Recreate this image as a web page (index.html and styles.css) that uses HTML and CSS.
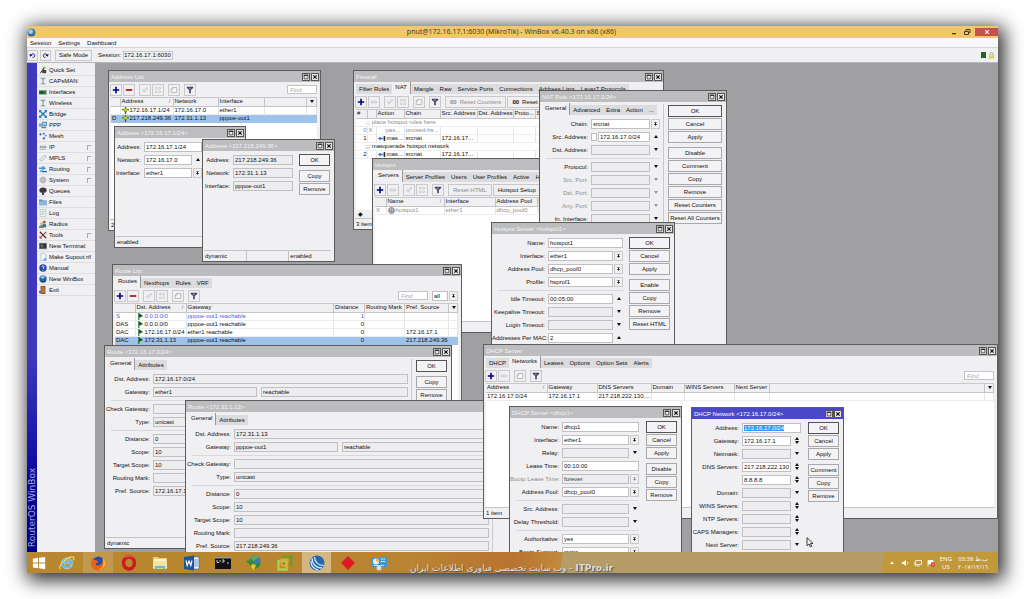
FILE: index.html
```html
<!DOCTYPE html>
<html lang="en">
<head>
    <meta charset="UTF-8">
    <meta name="viewport" content="width=device-width, initial-scale=1.0">
    <title>pnut@172.16.17.1:6030 (MikroTik) - WinBox v6.40.3 on x86 (x86)</title>
    <link rel="stylesheet" href="styles.css">
</head>
<body>
    <!-- shared icons -->
    <svg class="sprites" aria-hidden="true">
        <symbol id="i-plus" viewBox="0 0 10 10"><path d="M4 1h2v3h3v2H6v3H4V6H1V4h3z" fill="#00008b"/></symbol>
        <symbol id="i-minus" viewBox="0 0 10 10"><path d="M1 4h8v2H1z" fill="#a00000"/></symbol>
        <symbol id="i-minus-off" viewBox="0 0 10 10"><path d="M1.5 4h7v2h-7z" fill="#eee" stroke="#aaa" stroke-width=".6"/></symbol>
        <symbol id="i-check" viewBox="0 0 10 10"><path d="M2 5l2 2.5L8.500 2.500 7 2 4 5.500 3 4.500z" fill="#f4f4f4" stroke="#b0b0b0" stroke-width=".7"/></symbol>
        <symbol id="i-cross" viewBox="0 0 10 10"><path d="M2 2h2l1 1.500L6 2h2v1.500L6.500 5 8 6.500V8H6L5 6.500 4 8H2V6.500L3.500 5 2 3.500z" fill="#f4f4f4" stroke="#b0b0b0" stroke-width=".7"/></symbol>
        <symbol id="i-note" viewBox="0 0 10 10"><path d="M1.500 8V4l2-2h5v6z" fill="#f8f8f8" stroke="#999" stroke-width=".8"/><path d="M1.500 4h2V2" fill="none" stroke="#999" stroke-width=".7"/></symbol>
        <symbol id="i-filter" viewBox="0 0 10 10"><path d="M1 1h8v1.500L6 5v4H4V5L1 2.500z" fill="#3c4064"/><path d="M3 2.200h3L5 4.500z" fill="#a8aed0"/></symbol>
        <symbol id="i-max" viewBox="0 0 8 8"><path d="M1.500 1.500h5v5h-5z" fill="none" stroke="#333"/><path d="M1 1h6v1.600H1z" fill="#333"/></symbol>
        <symbol id="i-close" viewBox="0 0 8 8"><path d="M1.800 1.800l4.400 4.400M6.200 1.800L1.800 6.200" stroke="#111" stroke-width="1.500"/></symbol>
        <symbol id="i-drop" viewBox="0 0 8 8"><path d="M2 1h4v1H2zM3.300 2h1.400v2H6.500L4 6.800 1.500 4h1.800z" fill="currentColor"/></symbol>
        <symbol id="i-ip" viewBox="0 0 8 8"><path d="M3 0h2v2h3v2H5.500v1.500H4.800V8H3.200V5.500H2.500V4H0V2h3z" fill="#7b8a10"/><path d="M2 2.500h4L4 5z" fill="#e8e060"/><path d="M3.500 5h1v3h-1z" fill="#444"/></symbol>
        <symbol id="i-flag" viewBox="0 0 8 8"><path d="M1.500 0v8h1.200V5.500L7 3.500 2.700.5V0z" fill="#086018"/></symbol>
        <symbol id="i-masq" viewBox="0 0 10 8"><path d="M0 4l3-2.500V3h3v2H3v1.500z" fill="#2f6fb0"/><path d="M7 1h2v6H7z" fill="#223"/></symbol>
        <symbol id="i-hotspot" viewBox="0 0 8 8"><circle cx="4" cy="4" r="3.400" fill="#ddd" stroke="#666" stroke-width=".8"/><path d="M1 3.500h6M1 5h6M4 .5v7M2.500 1c-1 2-1 4 0 6M5.500 1c1 2 1 4 0 6" stroke="#777" stroke-width=".6" fill="none"/></symbol>
        <symbol id="i-antenna" viewBox="0 0 10 10"><path d="M4.400 3h1.200v5H8v1H2V8h2.400z" fill="#5f8f86"/><path d="M2 1h6v1.500H6.500L5 4 3.500 2.500H2z" fill="#7cb0a4"/></symbol>
    </svg>

    <div class="app">
        <header class="titlebar">
            <svg class="app-icon" viewBox="0 0 10 10"><circle cx="5" cy="5" r="4.500" fill="#3b7fb8"/><circle cx="4" cy="4" r="2.600" fill="#a5cbe6"/><path d="M1.500 6.500c2 2.500 5 2.500 7 0" stroke="#1b4b7d" fill="none"/></svg>
            <h1>pnut@172.16.17.1:6030 (MikroTik) - WinBox v6.40.3 on x86 (x86)</h1>
            <div class="caption-buttons">
                <button aria-label="Minimize"><svg viewBox="0 0 8 8"><path d="M2 5h4v1.300H2z" fill="#4a3a10"/></svg></button>
                <button aria-label="Restore"><svg viewBox="0 0 8 8"><path d="M1.500 3.500h4v3h-4zM3 3V1.500h4v3H6" fill="none" stroke="#4a3a10"/></svg></button>
                <button class="close" aria-label="Close"><svg viewBox="0 0 8 8"><path d="M2.200 2.200l3.600 3.600M5.800 2.200L2.200 5.800" stroke="#fff" stroke-width="1.100"/></svg></button>
            </div>
        </header>
        <nav class="menubar">
            <a href="#">Session</a>
            <a href="#">Settings</a>
            <a href="#">Dashboard</a>
        </nav>
        <div class="main-toolbar">
            <button class="sq" aria-label="Undo"><svg viewBox="0 0 8 8"><path d="M2 4c1-3 5-2 4.500.5C6.300 6 5 6.500 4 6" fill="none" stroke="#14148c" stroke-width="1.100"/><path d="M.5 2l.7 3.300L4 3.800z" fill="#14148c"/></svg></button>
            <button class="sq" aria-label="Redo"><svg viewBox="0 0 8 8"><path d="M6 4C5 1 1 2 1.500 4.500 1.700 6 3 6.500 4 6" fill="none" stroke="#14148c" stroke-width="1.100"/><path d="M7.500 2l-.7 3.300L4 3.800z" fill="#14148c"/></svg></button>
            <button class="safe">Safe Mode</button>
            <label for="session">Session:</label>
            <input id="session" type="text" value="172.16.17.1:6030" readonly>
            <span class="led"></span>
            <svg class="lock" viewBox="0 0 8 8"><path d="M2.500 4V2.500a1.500 1.500 0 0 1 3 0V4" fill="none" stroke="#999" stroke-width=".9"/><path d="M1 3.500h6V8H1z" fill="#d8c94e"/><path d="M1.500 5h5" stroke="#f5eea0"/></svg>
        </div>

        <div class="content">
            <div class="brand"><span>RouterOS WinBox</span></div>
            <nav class="side">
                <a href="#"><svg viewBox="0 0 10 10"><path d="M1 9l5-7 1 1-5 6z" fill="#222"/><path d="M4 9V5h5v4z" fill="#3d4a35"/><path d="M7 0l.6 1.500L9 2l-1.400.6L7 4l-.6-1.400L5 2z" fill="#9fb845"/></svg>Quick Set</a>
                <a href="#"><svg><use href="#i-antenna"/></svg>CAPsMAN</a>
                <a href="#"><svg viewBox="0 0 10 10"><path d="M0 3h9v5H0z" fill="#1f7a2e"/><path d="M2 4h3v3H2z" fill="#125020"/><path d="M9 2v7" stroke="#999"/></svg>Interfaces</a>
                <a href="#"><svg><use href="#i-antenna"/></svg>Wireless</a>
                <a href="#"><svg viewBox="0 0 10 10"><path d="M0 0h3.500L2.500 1.200 5 3.700l2.500-2.500L6.500 0H10v3.500L8.800 2.500 6.300 5l2.500 2.500L10 6.500V10H6.500l1-1.200L5 6.300 2.500 8.800l1 1.200H0V6.500l1.200 1L3.700 5 1.200 2.500 0 3.500z" fill="#2d83bd"/></svg>Bridge</a>
                <a href="#"><svg viewBox="0 0 10 10"><path d="M4 1h6v5H4z" fill="#3d7fb0"/><path d="M5 2h4v3H5z" fill="#a9d4ee"/><path d="M0 3h4v4H0z" fill="#79a8c8"/><path d="M3 7h6v2H3z" fill="#6a7f90"/></svg>PPP</a>
                <a href="#"><svg viewBox="0 0 10 10"><path d="M2 3l4-1 2 2-1 4" stroke="#a9c2e6" fill="none"/><circle cx="1.800" cy="3" r="1.300" fill="#3c64c8"/><circle cx="6" cy="2" r="1.200" fill="#3c64c8"/><circle cx="8.500" cy="4.500" r="1.200" fill="#5f8be0"/><circle cx="6" cy="8" r="1.400" fill="#3c64c8"/></svg>Mesh</a>
                <a href="#" class="sub"><svg viewBox="0 0 10 10"><path d="M1 3h8v4H1z" fill="#d6d9d6"/><path d="M1 4h2v2H1zM4 4h2v2H4zM7 4h2v2H7z" fill="#7b8b85"/><path d="M1 8h8" stroke="#aaa"/></svg>IP</a>
                <a href="#" class="sub"><svg viewBox="0 0 10 10"><path d="M1 7l5-5c2-1 3 1 2 2.500L4 8C2 9 1 8 1 7z" fill="#e6efe8" stroke="#92aaa0" stroke-width=".8"/></svg>MPLS</a>
                <a href="#" class="sub"><svg viewBox="0 0 10 10"><path d="M0 3h4V1l5 3-5 2.500V5H0z" fill="#3d95d4"/><path d="M10 9H4l-2-2 1-1 2 1.500h5z" fill="#1e6cb0"/><path d="M1 7l3-1v3H1z" fill="#69b2e4"/></svg>Routing</a>
                <a href="#" class="sub"><svg viewBox="0 0 10 10"><circle cx="5" cy="5" r="3.600" fill="#c4c4c4" stroke="#999" stroke-width="1.200" stroke-dasharray="1.400 .8"/><circle cx="5" cy="5" r="1.500" fill="#eee" stroke="#888" stroke-width=".6"/></svg>System</a>
                <a href="#"><svg viewBox="0 0 10 10"><ellipse cx="5" cy="4" rx="4.500" ry="3.300" fill="#35383c"/><path d="M4.300 6h1.600l.6 4H3.500z" fill="#4c3c38"/><path d="M2 3h2M6 5h2" stroke="#7a4050"/></svg>Queues</a>
                <a href="#"><svg viewBox="0 0 10 10"><path d="M0 2h4l1 1h5v6H0z" fill="#5d92bc"/><path d="M0 4h10v5H0z" fill="#8db9da"/></svg>Files</a>
                <a href="#"><svg viewBox="0 0 10 10"><path d="M1.500.5h7v9h-7z" fill="#f2faf5" stroke="#97b8ac" stroke-width=".8"/><path d="M3 3h4M3 5h4M3 7h3" stroke="#6aa894" stroke-width=".7"/></svg>Log</a>
                <a href="#"><svg viewBox="0 0 10 10"><circle cx="6.500" cy="2.500" r="2" fill="#a86a30"/><path d="M4 9V6l2.500-1.500L9 6v3z" fill="#3f6f9c"/><circle cx="3" cy="4.500" r="1.700" fill="#e2b070"/><path d="M0 10V8l3-2 3 2v2z" fill="#6e8f3e"/></svg>Radius</a>
                <a href="#" class="sub"><svg viewBox="0 0 10 10"><path d="M1 1l8 8" stroke="#7a2020" stroke-width="1.600"/><path d="M9 1L2 8" stroke="#555" stroke-width="1.300"/><path d="M.5 7l2.500 2.500" stroke="#c23030" stroke-width="1.600"/></svg>Tools</a>
                <a href="#"><svg viewBox="0 0 10 10"><path d="M0 1h10v8H0z" fill="#888"/><path d="M1 2h8v6H1z" fill="#2e3234"/><path d="M2 4h3M2 6h4" stroke="#b5b5b5" stroke-width=".8"/></svg>New Terminal</a>
                <a href="#"><svg viewBox="0 0 10 10"><path d="M2.500.5h4l2 2v7h-6z" fill="#fbfdff" stroke="#92aabd" stroke-width=".8"/><circle cx="7.500" cy="8" r="2" fill="#79b7e4"/></svg>Make Supout.rif</a>
                <a href="#"><svg viewBox="0 0 10 10"><circle cx="5" cy="5" r="4.600" fill="#2644a8"/><path d="M3.500 4c0-2 3-2 3-.3C6.500 5 5 5 5 6.300M5 7.200v1.200" stroke="#fff" stroke-width="1.100" fill="none"/></svg>Manual</a>
                <a href="#"><svg viewBox="0 0 10 10"><circle cx="5" cy="5" r="4.600" fill="#2464a0"/><path d="M1.500 3C3 0 7 0 8 2L5 5z" fill="#8fc0e4"/><path d="M2 7c2 2 5 2 6.500 0" stroke="#123a66" fill="none"/></svg>New WinBox</a>
                <a href="#"><svg viewBox="0 0 10 10"><path d="M2 0h6v10H2z" fill="#8a4f22"/><path d="M3 1h4v8H3z" fill="#b87436"/><path d="M0 6h3v3H0z" fill="#5e6f88"/><circle cx="6.300" cy="5.500" r=".6" fill="#f0d080"/></svg>Exit</a>
            </nav>

            <main class="desk">
                <!-- Address List -->
                <section class="win win-addresses">
                    <div class="bar"><h2>Address List</h2><button aria-label="Maximize"><svg><use href="#i-max"/></svg></button><button aria-label="Close"><svg><use href="#i-close"/></svg></button></div>
                    <div class="tools">
                        <button aria-label="Add"><svg><use href="#i-plus"/></svg></button>
                        <button aria-label="Remove"><svg><use href="#i-minus"/></svg></button>
                        <button class="sep" aria-label="Enable"><svg><use href="#i-check"/></svg></button>
                        <button aria-label="Disable"><svg><use href="#i-cross"/></svg></button>
                        <button class="sep" aria-label="Comment"><svg><use href="#i-note"/></svg></button>
                        <button class="sep" aria-label="Filter"><svg><use href="#i-filter"/></svg></button>
                        <input class="find" type="text" placeholder="Find" aria-label="Find address">
                    </div>
                    <div class="sheet">
                        <table class="t-addresses">
                            <thead><tr><th></th><th class="sorted">Address</th><th>Network</th><th>Interface</th><th></th><th class="more"></th></tr></thead>
                            <tbody>
                                <tr><td></td><td><svg><use href="#i-ip"/></svg>172.16.17.1/24</td><td>172.16.17.0</td><td>ether1</td><td></td><td></td></tr>
                                <tr class="sel"><td>D</td><td><svg><use href="#i-ip"/></svg>217.218.249.36</td><td>172.31.1.13</td><td>pppoe-out1</td><td></td><td></td></tr>
                            </tbody>
                        </table>
                    </div>
                    <div class="status"><span>2 items (1 selected)</span></div>
                </section>

                <!-- Address <172.16.17.1/24> -->
                <section class="win win-address-a">
                    <div class="bar"><h2>Address &lt;172.16.17.1/24&gt;</h2><button aria-label="Maximize"><svg><use href="#i-max"/></svg></button><button aria-label="Close"><svg><use href="#i-close"/></svg></button></div>
                    <div class="dialog">
                        <div class="fields">
                            <div class="row"><label for="aa1">Address:</label><input id="aa1" type="text" value="172.16.17.1/24"></div>
                            <div class="row"><label for="aa2">Network:</label><input id="aa2" type="text" value="172.16.17.0"><button class="arrow up" aria-label="Hide"></button></div>
                            <div class="row"><label for="aa3">Interface:</label><select id="aa3"><option>ether1</option></select><svg class="drop"><use href="#i-drop"/></svg></div>
                        </div>
                    </div>
                    <div class="status"><span>enabled</span></div>
                </section>

                <!-- Address <217.218.249.36> -->
                <section class="win win-address-b">
                    <div class="bar"><h2>Address &lt;217.218.249.36&gt;</h2><button aria-label="Maximize"><svg><use href="#i-max"/></svg></button><button aria-label="Close"><svg><use href="#i-close"/></svg></button></div>
                    <div class="dialog">
                        <div class="fields">
                            <div class="row"><label for="ab1">Address:</label><input id="ab1" type="text" value="217.218.249.36" readonly></div>
                            <div class="row"><label for="ab2">Network:</label><input id="ab2" type="text" value="172.31.1.13" readonly></div>
                            <div class="row"><label for="ab3">Interface:</label><input id="ab3" type="text" value="pppoe-out1" readonly></div>
                        </div>
                        <div class="actions"><button class="ok">OK</button><button class="gap">Copy</button><button>Remove</button></div>
                    </div>
                    <div class="status"><span>dynamic</span><span></span><span>enabled</span></div>
                </section>

                <!-- Firewall -->
                <section class="win win-firewall">
                    <div class="bar"><h2>Firewall</h2><button aria-label="Maximize"><svg><use href="#i-max"/></svg></button><button aria-label="Close"><svg><use href="#i-close"/></svg></button></div>
                    <div class="tabs">
                        <button>Filter Rules</button><button class="on">NAT</button><button>Mangle</button><button>Raw</button><button>Service Ports</button><button>Connections</button><button>Address Lists</button><button>Layer7 Protocols</button>
                    </div>
                    <div class="tools">
                        <button aria-label="Add"><svg><use href="#i-plus"/></svg></button>
                        <button aria-label="Remove"><svg><use href="#i-minus-off"/></svg></button>
                        <button class="sep" aria-label="Enable"><svg><use href="#i-check"/></svg></button>
                        <button aria-label="Disable"><svg><use href="#i-cross"/></svg></button>
                        <button class="sep" aria-label="Comment"><svg><use href="#i-note"/></svg></button>
                        <button class="sep" aria-label="Filter"><svg><use href="#i-filter"/></svg></button>
                        <button class="text sep" disabled><b>00</b> Reset Counters</button>
                        <button class="text"><b>00</b> Reset All Counters</button>
                    </div>
                    <div class="sheet">
                        <table class="t-nat">
                            <thead><tr><th>#</th><th></th><th>Action</th><th>Chain</th><th>Src. Address</th><th>Dst. Address</th><th>Proto...</th><th>Src. Port</th><th>Dst. Port</th></tr></thead>
                            <tbody>
                                <tr class="dim"><td colspan="9" class="note">;;; place hotspot rules here</td></tr>
                                <tr class="dim"><td>0</td><td>X</td><td class="deep">pas...</td><td>unused-hs...</td><td></td><td></td><td></td><td></td><td></td></tr>
                                <tr><td>1</td><td></td><td><svg class="wide"><use href="#i-masq"/></svg>mas...</td><td>srcnat</td><td>172.16.17...</td><td></td><td></td><td></td><td></td></tr>
                                <tr><td colspan="9" class="note">;;; masquerade hotspot network</td></tr>
                                <tr><td>2</td><td></td><td><svg class="wide"><use href="#i-masq"/></svg>mas...</td><td>srcnat</td><td>172.16.17...</td><td></td><td></td><td></td><td></td></tr>
                            </tbody>
                        </table>
                    </div>
                    <div class="hscroll"><span>&#9670;</span></div>
                    <div class="status"><span>3 items</span></div>
                </section>

                <!-- Hotspot -->
                <section class="win win-hotspot">
                    <div class="bar"><h2>Hotspot</h2><button aria-label="Maximize"><svg><use href="#i-max"/></svg></button><button aria-label="Close"><svg><use href="#i-close"/></svg></button></div>
                    <div class="tabs">
                        <button class="on">Servers</button><button>Server Profiles</button><button>Users</button><button>User Profiles</button><button>Active</button><button>Hosts</button>
                    </div>
                    <div class="tools">
                        <button aria-label="Add"><svg><use href="#i-plus"/></svg></button>
                        <button aria-label="Remove"><svg><use href="#i-minus-off"/></svg></button>
                        <button class="sep" aria-label="Enable"><svg><use href="#i-check"/></svg></button>
                        <button aria-label="Disable"><svg><use href="#i-cross"/></svg></button>
                        <button class="sep" aria-label="Filter"><svg><use href="#i-filter"/></svg></button>
                        <button class="text sep" disabled>Reset HTML</button>
                        <button class="text">Hotspot Setup</button>
                    </div>
                    <div class="sheet">
                        <table class="t-hotspot">
                            <thead><tr><th></th><th class="sorted">Name</th><th>Interface</th><th>Address Pool</th><th>Profile</th></tr></thead>
                            <tbody>
                                <tr class="dim"><td>X</td><td><svg><use href="#i-hotspot"/></svg>hotspot1</td><td>ether1</td><td>dhcp_pool0</td><td>hsprof1</td></tr>
                            </tbody>
                        </table>
                    </div>
                    <div class="status"><span></span></div>
                </section>

                <!-- NAT Rule -->
                <section class="win win-natrule">
                    <div class="bar"><h2>NAT Rule &lt;172.16.17.0/24&gt;</h2><button aria-label="Maximize"><svg><use href="#i-max"/></svg></button><button aria-label="Close"><svg><use href="#i-close"/></svg></button></div>
                    <div class="dialog tabbed">
                        <div class="pane">
                            <div class="tabs"><button class="on">General</button><button>Advanced</button><button>Extra</button><button>Action</button><button>...</button></div>
                            <div class="fields">
                                <div class="row"><label for="nr1">Chain:</label><select id="nr1"><option>srcnat</option></select><svg class="drop"><use href="#i-drop"/></svg></div>
                                <div class="row"><label for="nr2">Src. Address:</label><input type="checkbox" aria-label="Not source address"><input id="nr2" type="text" value="172.16.17.0/24"><button class="arrow up" aria-label="Hide"></button></div>
                                <div class="row"><label for="nr3">Dst. Address:</label><input id="nr3" class="off" type="text"><button class="arrow down" aria-label="Show"></button></div>
                                <div class="row rule"><label for="nr4">Protocol:</label><input id="nr4" class="off" type="text"><button class="arrow down" aria-label="Show"></button></div>
                                <div class="row dim"><label for="nr5">Src. Port:</label><input id="nr5" type="text" disabled><button class="arrow down" aria-label="Show" disabled></button></div>
                                <div class="row dim"><label for="nr6">Dst. Port:</label><input id="nr6" type="text" disabled><button class="arrow down" aria-label="Show" disabled></button></div>
                                <div class="row dim"><label for="nr7">Any. Port:</label><input id="nr7" type="text" disabled><button class="arrow down" aria-label="Show" disabled></button></div>
                                <div class="row"><label for="nr8">In. Interface:</label><input id="nr8" class="off" type="text"><button class="arrow down" aria-label="Show"></button></div>
                            </div>
                        </div>
                        <div class="actions"><button class="ok">OK</button><button>Cancel</button><button>Apply</button><button class="gap">Disable</button><button>Comment</button><button>Copy</button><button>Remove</button><button>Reset Counters</button><button>Reset All Counters</button></div>
                    </div>
                </section>

                <!-- Hotspot Server -->
                <section class="win win-hsserver">
                    <div class="bar"><h2>Hotspot Server &lt;hotspot1&gt;</h2><button aria-label="Maximize"><svg><use href="#i-max"/></svg></button><button aria-label="Close"><svg><use href="#i-close"/></svg></button></div>
                    <div class="dialog">
                        <div class="fields">
                            <div class="row"><label for="hs1">Name:</label><input id="hs1" type="text" value="hotspot1"></div>
                            <div class="row"><label for="hs2">Interface:</label><select id="hs2"><option>ether1</option></select><svg class="drop"><use href="#i-drop"/></svg></div>
                            <div class="row"><label for="hs3">Address Pool:</label><select id="hs3"><option>dhcp_pool0</option></select><svg class="drop"><use href="#i-drop"/></svg></div>
                            <div class="row"><label for="hs4">Profile:</label><select id="hs4"><option>hsprof1</option></select><svg class="drop"><use href="#i-drop"/></svg></div>
                            <div class="row rule"><label for="hs5">Idle Timeout:</label><input id="hs5" type="text" value="00:05:00"><button class="arrow up" aria-label="Hide"></button></div>
                            <div class="row"><label for="hs6">Keepalive Timeout:</label><input id="hs6" class="off" type="text"><button class="arrow down" aria-label="Show"></button></div>
                            <div class="row"><label for="hs7">Login Timeout:</label><input id="hs7" class="off" type="text"><button class="arrow down" aria-label="Show"></button></div>
                            <div class="row"><label for="hs8">Addresses Per MAC:</label><input id="hs8" type="text" value="2"><button class="arrow up" aria-label="Hide"></button></div>
                        </div>
                        <div class="actions"><button class="ok">OK</button><button>Cancel</button><button>Apply</button><button class="gap">Enable</button><button>Copy</button><button>Remove</button><button>Reset HTML</button></div>
                    </div>
                </section>

                <!-- Route List -->
                <section class="win win-routes">
                    <div class="bar"><h2>Route List</h2><button aria-label="Maximize"><svg><use href="#i-max"/></svg></button><button aria-label="Close"><svg><use href="#i-close"/></svg></button></div>
                    <div class="tabs"><button class="on">Routes</button><button>Nexthops</button><button>Rules</button><button>VRF</button></div>
                    <div class="tools">
                        <button aria-label="Add"><svg><use href="#i-plus"/></svg></button>
                        <button aria-label="Remove"><svg><use href="#i-minus"/></svg></button>
                        <button class="sep" aria-label="Enable"><svg><use href="#i-check"/></svg></button>
                        <button aria-label="Disable"><svg><use href="#i-cross"/></svg></button>
                        <button class="sep" aria-label="Comment"><svg><use href="#i-note"/></svg></button>
                        <button class="sep" aria-label="Filter"><svg><use href="#i-filter"/></svg></button>
                        <input class="find" type="text" placeholder="Find" aria-label="Find route">
                        <select class="which" aria-label="Table"><option>all</option></select><svg class="drop"><use href="#i-drop"/></svg>
                    </div>
                    <div class="sheet">
                        <table class="t-routes">
                            <thead><tr><th></th><th class="sorted">Dst. Address</th><th>Gateway</th><th>Distance</th><th>Routing Mark</th><th>Pref. Source</th><th class="more"></th></tr></thead>
                            <tbody>
                                <tr class="blue"><td>S</td><td><svg><use href="#i-flag"/></svg>0.0.0.0/0</td><td>pppoe-out1 reachable</td><td class="num">1</td><td></td><td></td><td></td></tr>
                                <tr><td>DAS</td><td><svg><use href="#i-flag"/></svg>0.0.0.0/0</td><td>pppoe-out1 reachable</td><td class="num">0</td><td></td><td></td><td></td></tr>
                                <tr><td>DAC</td><td><svg><use href="#i-flag"/></svg>172.16.17.0/24</td><td>ether1 reachable</td><td class="num">0</td><td></td><td>172.16.17.1</td><td></td></tr>
                                <tr class="sel"><td>DAC</td><td><svg><use href="#i-flag"/></svg>172.31.1.13</td><td>pppoe-out1 reachable</td><td class="num">0</td><td></td><td>217.218.249.36</td><td></td></tr>
                            </tbody>
                        </table>
                    </div>
                </section>

                <!-- Route <172.16.17.0/24> -->
                <section class="win win-route-a">
                    <div class="bar"><h2>Route &lt;172.16.17.0/24&gt;</h2><button aria-label="Maximize"><svg><use href="#i-max"/></svg></button><button aria-label="Close"><svg><use href="#i-close"/></svg></button></div>
                    <div class="dialog tabbed">
                        <div class="pane">
                            <div class="tabs"><button class="on">General</button><button>Attributes</button></div>
                            <div class="fields">
                                <div class="row"><label for="ra1">Dst. Address:</label><input id="ra1" type="text" value="172.16.17.0/24" readonly></div>
                                <div class="row"><label for="ra2">Gateway:</label><input id="ra2" class="gw" type="text" value="ether1" readonly><input type="text" value="reachable" aria-label="Gateway state" readonly></div>
                                <div class="row rule"><label for="ra3">Check Gateway:</label><input id="ra3" type="text" readonly></div>
                                <div class="row"><label for="ra4">Type:</label><input id="ra4" type="text" value="unicast" readonly></div>
                                <div class="row rule"><label for="ra5">Distance:</label><input id="ra5" type="text" value="0" readonly></div>
                                <div class="row"><label for="ra6">Scope:</label><input id="ra6" type="text" value="10" readonly></div>
                                <div class="row"><label for="ra7">Target Scope:</label><input id="ra7" type="text" value="10" readonly></div>
                                <div class="row"><label for="ra8">Routing Mark:</label><input id="ra8" type="text" readonly></div>
                                <div class="row"><label for="ra9">Pref. Source:</label><input id="ra9" type="text" value="172.16.17.1" readonly></div>
                            </div>
                        </div>
                        <div class="actions"><button class="ok">OK</button><button class="gap">Copy</button><button>Remove</button></div>
                    </div>
                    <div class="status"><span>dynamic</span></div>
                </section>

                <!-- Route <172.31.1.13> -->
                <section class="win win-route-b">
                    <div class="bar"><h2>Route &lt;172.31.1.13&gt;</h2><button aria-label="Maximize"><svg><use href="#i-max"/></svg></button><button aria-label="Close"><svg><use href="#i-close"/></svg></button></div>
                    <div class="dialog tabbed">
                        <div class="pane">
                            <div class="tabs"><button class="on">General</button><button>Attributes</button></div>
                            <div class="fields">
                                <div class="row"><label for="rb1">Dst. Address:</label><input id="rb1" type="text" value="172.31.1.13" readonly></div>
                                <div class="row"><label for="rb2">Gateway:</label><input id="rb2" class="gw" type="text" value="pppoe-out1" readonly><input type="text" value="reachable" aria-label="Gateway state" readonly></div>
                                <div class="row rule"><label for="rb3">Check Gateway:</label><input id="rb3" type="text" readonly></div>
                                <div class="row"><label for="rb4">Type:</label><input id="rb4" type="text" value="unicast" readonly></div>
                                <div class="row rule"><label for="rb5">Distance:</label><input id="rb5" type="text" value="0" readonly></div>
                                <div class="row"><label for="rb6">Scope:</label><input id="rb6" type="text" value="10" readonly></div>
                                <div class="row"><label for="rb7">Target Scope:</label><input id="rb7" type="text" value="10" readonly></div>
                                <div class="row"><label for="rb8">Routing Mark:</label><input id="rb8" type="text" readonly></div>
                                <div class="row"><label for="rb9">Pref. Source:</label><input id="rb9" type="text" value="217.218.249.36" readonly></div>
                            </div>
                        </div>
                        <div class="actions"></div>
                    </div>
                </section>

                <!-- DHCP Server -->
                <section class="win win-dhcp">
                    <div class="bar"><h2>DHCP Server</h2><button aria-label="Maximize"><svg><use href="#i-max"/></svg></button><button aria-label="Close"><svg><use href="#i-close"/></svg></button></div>
                    <div class="tabs"><button>DHCP</button><button class="on">Networks</button><button>Leases</button><button>Options</button><button>Option Sets</button><button>Alerts</button></div>
                    <div class="tools">
                        <button aria-label="Add"><svg><use href="#i-plus"/></svg></button>
                        <button aria-label="Remove"><svg><use href="#i-minus-off"/></svg></button>
                        <button class="sep" aria-label="Comment"><svg><use href="#i-note"/></svg></button>
                        <button class="sep" aria-label="Filter"><svg><use href="#i-filter"/></svg></button>
                        <input class="find" type="text" placeholder="Find" aria-label="Find network">
                    </div>
                    <div class="sheet">
                        <table class="t-dhcp">
                            <thead><tr><th class="sorted">Address</th><th>Gateway</th><th>DNS Servers</th><th>Domain</th><th>WINS Servers</th><th>Next Server</th><th></th><th class="more"></th></tr></thead>
                            <tbody>
                                <tr><td>172.16.17.0/24</td><td>172.16.17.1</td><td>217.218.222.130,...</td><td></td><td></td><td></td><td></td><td></td></tr>
                            </tbody>
                        </table>
                    </div>
                    <div class="status"><span>1 item</span></div>
                </section>

                <!-- DHCP Server <dhcp1> -->
                <section class="win win-dhcp1">
                    <div class="bar"><h2>DHCP Server &lt;dhcp1&gt;</h2><button aria-label="Maximize"><svg><use href="#i-max"/></svg></button><button aria-label="Close"><svg><use href="#i-close"/></svg></button></div>
                    <div class="dialog">
                        <div class="fields">
                            <div class="row"><label for="ds1">Name:</label><input id="ds1" type="text" value="dhcp1"></div>
                            <div class="row"><label for="ds2">Interface:</label><select id="ds2"><option>ether1</option></select><svg class="drop"><use href="#i-drop"/></svg></div>
                            <div class="row"><label for="ds3">Relay:</label><input id="ds3" class="off" type="text"><button class="arrow down" aria-label="Show"></button></div>
                            <div class="row"><label for="ds4">Lease Time:</label><input id="ds4" type="text" value="00:10:00"></div>
                            <div class="row dim"><label for="ds5">Bootp Lease Time:</label><select id="ds5" disabled><option>forever</option></select><svg class="drop"><use href="#i-drop"/></svg></div>
                            <div class="row"><label for="ds6">Address Pool:</label><select id="ds6"><option>dhcp_pool0</option></select><svg class="drop"><use href="#i-drop"/></svg></div>
                            <div class="row rule"><label for="ds7">Src. Address:</label><input id="ds7" class="off" type="text"><button class="arrow down" aria-label="Show"></button></div>
                            <div class="row"><label for="ds8">Delay Threshold:</label><input id="ds8" class="off" type="text"><button class="arrow down" aria-label="Show"></button></div>
                            <div class="row rule"><label for="ds9">Authoritative:</label><select id="ds9"><option>yes</option></select><svg class="drop"><use href="#i-drop"/></svg></div>
                            <div class="row"><label for="ds10">Bootp Support:</label><select id="ds10"><option>static</option></select><svg class="drop"><use href="#i-drop"/></svg></div>
                        </div>
                        <div class="actions"><button class="ok">OK</button><button>Cancel</button><button>Apply</button><button class="gap">Disable</button><button>Copy</button><button>Remove</button></div>
                    </div>
                </section>

                <!-- DHCP Network (active window) -->
                <section class="win win-dhcpnet active">
                    <div class="bar"><h2>DHCP Network &lt;172.16.17.0/24&gt;</h2><button aria-label="Maximize"><svg><use href="#i-max"/></svg></button><button aria-label="Close"><svg><use href="#i-close"/></svg></button></div>
                    <div class="dialog">
                        <div class="fields">
                            <div class="row"><label for="dn1">Address:</label><input id="dn1" type="text" value="172.16.17.0/24" autofocus></div>
                            <div class="row"><label for="dn2">Gateway:</label><input id="dn2" type="text" value="172.16.17.1"><button class="arrow up down" aria-label="Add or remove"></button></div>
                            <div class="row"><label for="dn3">Netmask:</label><input id="dn3" class="off" type="text"><button class="arrow down" aria-label="Show"></button></div>
                            <div class="row"><label for="dn4">DNS Servers:</label><input id="dn4" type="text" value="217.218.222.130"><button class="arrow up down" aria-label="Add or remove"></button></div>
                            <div class="row"><label for="dn5"></label><input id="dn5" type="text" value="8.8.8.8" aria-label="Second DNS server"><button class="arrow up down" aria-label="Add or remove"></button></div>
                            <div class="row"><label for="dn6">Domain:</label><input id="dn6" class="off" type="text"><button class="arrow down" aria-label="Show"></button></div>
                            <div class="row"><label for="dn7">WINS Servers:</label><input id="dn7" class="off" type="text"><button class="arrow up down" aria-label="Add or remove"></button></div>
                            <div class="row"><label for="dn8">NTP Servers:</label><input id="dn8" class="off" type="text"><button class="arrow up down" aria-label="Add or remove"></button></div>
                            <div class="row"><label for="dn9">CAPS Managers:</label><input id="dn9" class="off" type="text"><button class="arrow up down" aria-label="Add or remove"></button></div>
                            <div class="row"><label for="dn10">Next Server:</label><input id="dn10" class="off" type="text"><button class="arrow down" aria-label="Show"></button></div>
                        </div>
                        <div class="actions"><button class="ok">OK</button><button>Cancel</button><button>Apply</button><button class="gap">Comment</button><button>Copy</button><button>Remove</button></div>
                    </div>
                </section>

                <svg class="pointer" viewBox="0 0 8 11"><path d="M1 .7v8l2-1.800 1.300 3 1.400-.6L4.500 6.500H7z" fill="#fff" stroke="#222" stroke-width=".9"/></svg>
            </main>
        </div>

        <footer class="taskbar">
            <button class="start" aria-label="Start"><svg viewBox="0 0 16 16"><path d="M1 3l6-1v5.500H1zM8 1.900L15 1v6.500H8zM1 8.500h6V14l-6-1zM8 8.500h7V15l-7-.9z" fill="#fff"/></svg></button>
            <div class="tasks">
                <button aria-label="Internet Explorer"><svg viewBox="0 0 16 16"><path d="M13.500 9H5c.3 3.300 4.500 4 6 1.500h2.300C11.500 15.500 2.500 15 2.500 8.500S11 1.500 13 6c.4 1 .5 2 .5 3zM5.100 7h5.600C10.400 4.300 5.500 4.300 5.100 7z" fill="#45b5ec" stroke="#dff2fb" stroke-width=".5"/><path d="M1 14C-1 10 9 1 14.500 2c1 .5.5 2-.5 3.500" fill="none" stroke="#f4d858" stroke-width="1.200"/></svg></button>
                <button class="lit" aria-label="Firefox"><svg viewBox="0 0 16 16"><circle cx="8.500" cy="7.500" r="6" fill="#2b4f9e"/><path d="M2 3c0 2-1 3-1 5.500A7 7 0 0 0 15 9c.3-3-1-5-2.500-6 1 3-.5 7-4 7.500C6 10.500 5 9 6 8l2.500-.5L7 5.500 4.500 5z" fill="#e8631c"/><path d="M12.500 3c2 1.500 3 4 2.300 7-1 3.500-4 5-7 4.700 5-.7 7-5 4.700-11.700z" fill="#f8c535"/></svg></button>
                <button aria-label="Opera"><svg viewBox="0 0 16 16"><ellipse cx="8" cy="8" rx="5.500" ry="6" fill="none" stroke="#cf1a20" stroke-width="3.400"/><path d="M4 3c2-2.500 6-2.500 8 0" stroke="#f06a60" fill="none"/></svg></button>
                <button aria-label="File Explorer"><svg viewBox="0 0 16 16"><path d="M1 2h5l1 1h8v11H1z" fill="#e8cf7c"/><path d="M2 4h12v3H2z" fill="#fff5cc"/><path d="M1 6h14v7H1z" fill="#f4e2a0"/><path d="M3 15v-4h10v4h-2v-2H5v2z" fill="#62b8e0"/></svg></button>
                <button aria-label="Word"><svg viewBox="0 0 16 16"><path d="M8 2h7v12H8z" fill="#f4f7fb" stroke="#345c9c" stroke-width=".6"/><path d="M10 5h4M10 7h4M10 9h4M10 11h4" stroke="#6f90c4"/><path d="M0 2l10-1.500v15L0 14z" fill="#21529c"/><path d="M2 5.500l1.200 5L5 6l1.800 4.500L8 5.500" stroke="#fff" fill="none" stroke-width="1.200"/></svg></button>
                <button aria-label="Command Prompt"><svg viewBox="0 0 16 16"><path d="M0 2h16v12H0z" fill="#111"/><path d="M0 2h16v1.500H0z" fill="#999"/><path d="M2 5v2.500h2M5 5v2M7 5h2v2H7M12 8h2" stroke="#ddd" fill="none" stroke-width=".9"/></svg></button>
                <button aria-label="Download Manager"><svg viewBox="0 0 16 16"><circle cx="9" cy="6" r="5.500" fill="#3c78b4"/><path d="M5 3c2-3 6-3 8 0-2 1-3 0-4 2s-3 1-4-2z" fill="#57b058"/><path d="M0 6l6-1 3 4 6-1-2 4-5 3-3-4z" fill="#2e8e34"/><path d="M6 9l4 1-2 5.500L5 12z" fill="#f0c42c"/></svg></button>
                <button aria-label="vSphere Client"><svg viewBox="0 0 16 16"><path d="M6 1.500h8.500v8H6z" fill="none" stroke="#6f9c28" stroke-width="2.400"/><path d="M1.500 6h8v8.500h-8z" fill="none" stroke="#a9cf50" stroke-width="2.400"/><path d="M4.500 4.500h6v6h-6z" fill="none" stroke="#f0a032" stroke-width="1.800"/></svg></button>
                <button class="lit strong" aria-label="WinBox"><svg viewBox="0 0 16 16"><circle cx="8" cy="8" r="7.500" fill="#2468ac"/><path d="M3 3c0 6 4 10 10 10M5.500 2c0 5 4 8.500 9 8.500M2 6c0 5 3 8 7 9" stroke="#cfe4f6" fill="none" stroke-width="1.300"/></svg></button>
                <button aria-label="AnyDesk"><svg viewBox="0 0 16 16"><path d="M8 1l7 7-7 7-7-7z" fill="#de1a24"/></svg></button>
                <button aria-label="Control Panel"><svg viewBox="0 0 16 16"><path d="M0 2h16v10H0z" fill="#3f9ad6"/><circle cx="5" cy="6.500" r="3" fill="#e6f3fa"/><path d="M5 6.500V3.500a3 3 0 0 1 3 3z" fill="#f0b840"/><path d="M10 4h4M10 6.500h4M3 10.500h10" stroke="#fff" stroke-width="1.200" stroke-dasharray="1.500 .8"/><circle cx="8" cy="13" r="2.500" fill="#d4dde2"/></svg></button>
            </div>
            <div class="tray">
                <svg viewBox="0 0 8 8"><path d="M4 2.500L6 5H2z" fill="#fff"/></svg>
                <svg viewBox="0 0 8 8"><path d="M1 3h1.500L5 1v6L2.500 5H1z" fill="#fff"/><path d="M6.200 2.500c.8 1 .8 2 0 3" stroke="#fff" fill="none" stroke-width=".7"/></svg>
                <svg viewBox="0 0 8 8"><path d="M1.500 1.500h6v4h-6zM3 7h3" fill="none" stroke="#eee" stroke-width=".9"/><path d="M.8 2.500v4h2" stroke="#eee" fill="none" stroke-width=".8"/></svg>
                <svg viewBox="0 0 8 8"><path d="M1 1v6.500M1.500 1.500H6v3.500H1.500z" stroke="#fff" fill="#fff" stroke-width=".8"/><circle cx="5.800" cy="5.500" r="2.200" fill="#d22b2b"/><path d="M4.900 4.600l1.800 1.800M6.700 4.600L4.900 6.400" stroke="#fff" stroke-width=".7"/></svg>
                <div class="lang">ENG<br>US</div>
                <div class="clock">03:38 ب.ظ<br>٢٠١٧/١٢/١٦</div>
            </div>
        </footer>
        <p class="watermark" dir="rtl"><bdi>ITPro.ir</bdi> - وب سایت تخصصی فناوری اطلاعات ایران</p>
    </div>

    <script>
        document.getElementById('dn1').select();
    </script>
</body>
</html>
```
FILE: styles.css
```css
* {
    box-sizing: border-box;
}

body {
    margin: 0;
    height: 100vh;
    padding: 26px 26px 26px 27px;
    overflow: hidden;
    background-color: #fff;
    font-family: "Liberation Sans", Arial, sans-serif;
    font-size: 6px;
    line-height: 8px;
    color: #111;
}

h1, h2, p {
    margin: 0;
    font-weight: normal;
}

a {
    color: inherit;
    text-decoration: none;
}

button, input, select {
    margin: 0;
    font: inherit;
    color: inherit;
    border-radius: 0;
    outline: none;
}

button {
    padding: 0;
    background: none;
    border: none;
    white-space: nowrap;
}

::selection {
    color: #fff;
    background-color: #3399ff;
}

.sprites {
    position: absolute;
    width: 0;
    height: 0;
}

/* main window */
.app {
    position: relative;
    display: flex;
    flex-direction: column;
    height: 100%;
    background-color: #f0eff1;
    box-shadow: 3px 4px 18px 3px rgba(0, 0, 0, 0.85);
}

.titlebar {
    display: flex;
    align-items: center;
    height: 12px;
    background-color: #f1c76e;
}

.titlebar h1 {
    flex: 1;
    padding-left: 40px;
    text-align: center;
    font-family: "Noto Sans", "Open Sans", sans-serif;
    font-size: 7px;
    color: #4a3c1c;
}

.app-icon {
    width: 9px;
    height: 9px;
}

.caption-buttons {
    display: flex;
}

.caption-buttons button {
    display: flex;
    justify-content: center;
    width: 13px;
}

.caption-buttons svg {
    width: 8px;
    height: 8px;
}

.caption-buttons .close {
    width: 23px;
    margin-left: 2px;
    background-color: #c9504b;
}

.menubar {
    display: flex;
    gap: 7px;
    height: 10px;
    padding: 1px 3px;
    background-color: #f7f6f8;
    border-bottom: 1px solid #d4d3d5;
}

.main-toolbar {
    display: flex;
    align-items: center;
    gap: 2px;
    height: 15px;
    padding: 0 3px 0 0;
    border-bottom: 1px solid #b8b8b8;
}

.main-toolbar button {
    display: flex;
    align-items: center;
    justify-content: center;
    height: 11px;
    border: 1px solid #c9c8ca;
}

.main-toolbar .sq {
    width: 11px;
}

.main-toolbar .sq svg {
    width: 7px;
    height: 7px;
}

.main-toolbar .safe {
    width: 37px;
    margin: 0 4px 0 2px;
}

.main-toolbar input {
    width: 50px;
    height: 9px;
    padding: 0;
    background: none;
    border: 1px solid #c9c8ca;
}

.led {
    width: 5px;
    height: 6px;
    margin-left: auto;
    background-color: #1f661f;
}

.lock {
    width: 7px;
    height: 8px;
}

.content {
    display: flex;
    flex: 1;
    min-height: 0;
}

.brand {
    display: flex;
    align-items: flex-end;
    justify-content: center;
    width: 10px;
    padding-bottom: 5px;
    background: linear-gradient(#3f38bd 60%, #0a08a0 85%, #000084);
}

.brand span {
    writing-mode: vertical-rl;
    transform: rotate(180deg);
    font-family: "DejaVu Sans", sans-serif;
    font-size: 9px;
    line-height: 11px;
    color: #a5a5dc;
}

/* left menu */
.side {
    width: 58px;
    padding-top: 2px;
}

.side a {
    display: flex;
    align-items: center;
    gap: 2px;
    height: 11px;
    padding-left: 2px;
    white-space: nowrap;
    border-bottom: 1px solid #dedde0;
}

.side svg {
    flex: none;
    width: 8px;
    height: 8px;
}

.side .sub::after {
    content: "";
    width: 3px;
    height: 4px;
    margin: 0 4px 0 auto;
    border: 1px solid #aaa;
    border-width: 1px 0 0 1px;
}

/* window area */
.desk {
    position: relative;
    flex: 1;
    overflow: hidden;
    background-color: #a09fa1;
}

.win {
    position: absolute;
    display: flex;
    flex-direction: column;
    background-color: #f0eff1;
    border: 1px solid #5c5c5c;
    overflow: hidden;
}

.win-addresses { left: 13px; top: 7px; width: 213px; height: 161px; }
.win-address-a { left: 19px; top: 63px; width: 132px; height: 122px; }
.win-address-b { left: 107px; top: 76px; width: 133px; height: 123px; }
.win-firewall { left: 258px; top: 7px; width: 311px; height: 160px; }
.win-hotspot { left: 277px; top: 95px; width: 300px; height: 175px; }
.win-natrule { left: 444px; top: 27px; width: 188px; height: 280px; }
.win-hsserver { left: 396px; top: 159px; width: 184px; height: 160px; }
.win-routes { left: 17px; top: 201px; width: 350px; height: 240px; }
.win-route-a { left: 9px; top: 282px; width: 348px; height: 204px; }
.win-route-b { left: 90px; top: 337px; width: 348px; height: 204px; }
.win-dhcp { left: 388px; top: 281px; width: 515px; height: 175px; }
.win-dhcp1 { left: 414px; top: 343px; width: 173px; height: 190px; }
.win-dhcpnet { left: 596px; top: 344px; width: 153px; height: 180px; }

.bar {
    display: flex;
    align-items: center;
    gap: 1px;
    flex: none;
    height: 11px;
    padding: 0 1px 0 2px;
    background-color: #bdbcbe;
}

.bar h2 {
    flex: 1;
    font-size: 6px;
    color: #f4f4f4;
}

.bar button {
    display: flex;
    width: 8px;
    height: 8px;
    background-color: #e6e5e7;
    border: 1px solid #555;
}

.bar svg {
    width: 6px;
    height: 6px;
}

.active .bar {
    background-color: #4a48c8;
}

.active .bar h2 {
    color: #fff;
}

.tabs {
    display: flex;
    align-items: flex-end;
    flex: none;
    height: 12px;
    padding-left: 2px;
}

.tabs button {
    height: 10px;
    padding: 0 3px;
    background-color: #dcdbdd;
}

.tabs .on {
    height: 12px;
    padding-bottom: 2px;
    background-color: #f0eff1;
    border-right: 1px solid #999;
}

.tools {
    display: flex;
    align-items: center;
    gap: 1px;
    flex: none;
    height: 15px;
    padding: 0 3px 0 1px;
}

.tools button {
    display: flex;
    align-items: center;
    justify-content: center;
    width: 12px;
    height: 12px;
    border: 1px solid #c9c8ca;
}

.tools button svg {
    width: 8px;
    height: 8px;
}

.tools .sep {
    margin-left: 3px;
}

.tools .text {
    width: auto;
    padding: 0 4px;
}

.tools .text b {
    margin-right: 3px;
}

button:disabled {
    color: #8d8d8d;
}

.find {
    width: 30px;
    height: 9px;
    margin-left: auto;
    padding: 0 2px;
    background-color: #fff;
    border: 1px solid #c4c3c5;
}

.find::placeholder {
    font-style: italic;
    color: #aaa;
}

.tools .which {
    width: 16px;
    margin-left: 3px;
    flex: none;
}

/* lists */
.sheet {
    flex: 1;
    min-height: 0;
    margin: 0 3px 0 2px;
    overflow: hidden;
    background-color: #fff;
    border-top: 1px solid #c9c8ca;
}

table {
    width: 100%;
    table-layout: fixed;
    border-collapse: collapse;
}

th, td {
    height: 8px;
    padding: 0 0 0 1px;
    overflow: hidden;
    line-height: 7px;
    font-weight: normal;
    text-align: left;
    white-space: nowrap;
    border-right: 1px solid #e6e5e7;
    border-bottom: 1px solid #ededed;
}

th {
    background-color: #f0eff1;
    border-color: #c4c3c5;
}

td svg {
    width: 7px;
    height: 7px;
    margin-right: 1px;
    vertical-align: top;
}

.sorted::after {
    content: "/";
    float: right;
    padding-right: 2px;
    color: #888;
}

.more::after {
    content: "";
    display: block;
    width: 0;
    margin: 0 auto;
    border: 2px solid transparent;
    border-top: 3px solid #111;
    border-bottom: none;
}

.sel td {
    background-color: #9fc2ea;
    border-color: #9fc2ea;
}

.dim {
    color: #8d8d8d;
}

.blue {
    color: #5a55dc;
}

td.num {
    text-align: right;
}

td.note {
    padding-left: 9px;
}

td.deep {
    padding-left: 9px;
}

td svg.wide {
    width: 8px;
}

.t-addresses th:nth-child(1) { width: 9px; }
.t-addresses th:nth-child(2) { width: 53px; }
.t-addresses th:nth-child(3) { width: 45px; }
.t-addresses th:nth-child(4) { width: 46px; }
.t-addresses th:last-child { width: 10px; }

.t-nat th:nth-child(1) { width: 11px; }
.t-nat th:nth-child(2) { width: 9px; }
.t-nat th:nth-child(3) { width: 28px; }
.t-nat th:nth-child(4) { width: 36px; }
.t-nat th:nth-child(5) { width: 37px; }
.t-nat th:nth-child(6) { width: 36px; }
.t-nat th:nth-child(7) { width: 22px; }
.t-nat th:nth-child(8) { width: 35px; }
.t-nat td:first-child:not(.note) { text-align: right; }

.t-hotspot th:nth-child(1) { width: 11px; }
.t-hotspot th:nth-child(2) { width: 58px; }
.t-hotspot th:nth-child(3) { width: 51px; }
.t-hotspot th:nth-child(4) { width: 42px; }

.t-routes th:nth-child(1) { width: 20px; }
.t-routes th:nth-child(2) { width: 51px; }
.t-routes th:nth-child(4) { width: 31px; }
.t-routes th:nth-child(5) { width: 40px; }
.t-routes th:nth-child(6) { width: 44px; }
.t-routes th:last-child { width: 9px; }

.t-dhcp th:nth-child(1) { width: 61px; }
.t-dhcp th:nth-child(2) { width: 50px; }
.t-dhcp th:nth-child(3) { width: 54px; }
.t-dhcp th:nth-child(4) { width: 33px; }
.t-dhcp th:nth-child(5) { width: 50px; }
.t-dhcp th:nth-child(6) { width: 35px; }
.t-dhcp th:last-child { width: 9px; }

.hscroll {
    flex: none;
    height: 8px;
    padding-left: 4px;
}

.status {
    display: flex;
    flex: none;
    height: 11px;
    margin: 0 3px 0 1px;
    border-top: 1px solid #c4c3c5;
}

.status span {
    flex: 1;
    padding: 1px;
    white-space: nowrap;
}

.status span + span {
    border-left: 1px solid #c4c3c5;
}

/* property dialogs */
.dialog {
    display: flex;
    flex: 1;
    gap: 6px;
    min-height: 0;
    padding: 2px 4px 0 0;
}

.dialog.tabbed {
    gap: 4px;
}

.pane {
    flex: 1;
    min-width: 0;
    border-right: 1px solid #c9c8ca;
    padding-right: 3px;
}

.pane .tabs {
    height: 11px;
}

.pane .fields {
    padding-top: 2px;
}

.fields {
    flex: 1;
    min-width: 0;
}

.row {
    display: flex;
    align-items: center;
    gap: 1px;
    height: 13px;
}

.row.rule {
    height: 17px;
    padding-top: 4px;
    background: linear-gradient(#d9d8da, #d9d8da) 6px 2px / 100% 1px no-repeat;
}

.row label {
    flex: none;
    width: 50px;
    padding-right: 2px;
    text-align: right;
    white-space: nowrap;
}

.row input[type="text"], select {
    flex: 1;
    min-width: 0;
    width: 0;
    height: 10px;
    padding: 0 1px;
    background-color: #fff;
    border: 1px solid #c0bfc1;
}

.row input[type="text"]:read-only, .row input[type="text"].off, .row input[type="text"]:disabled {
    background-color: #edecee;
}

.row input[type="checkbox"] {
    appearance: none;
    width: 6px;
    height: 8px;
    background-color: #fff;
    border: 1px solid #c0bfc1;
}

.row input[type="text"].gw {
    flex: none;
    width: 104px;
    margin-right: 3px;
}

select {
    appearance: none;
}

select:disabled {
    color: #333;
    opacity: 1;
    background-color: #edecee;
}

.drop {
    flex: none;
    width: 9px;
    height: 10px;
    padding: 1px;
    border: 1px solid #c9c8ca;
}

.arrow {
    display: flex;
    flex: none;
    flex-direction: column;
    align-items: center;
    justify-content: center;
    gap: 1px;
    width: 9px;
    height: 10px;
}

.arrow.up::before, .arrow.down::after {
    content: "";
    border: 2px solid transparent;
}

.arrow.up::before {
    border-bottom: 3px solid #111;
    border-top: none;
}

.arrow.down::after {
    border-top: 3px solid #111;
    border-bottom: none;
}

.arrow:disabled::after {
    border-top-color: #999;
}

.actions {
    display: flex;
    flex: none;
    flex-direction: column;
    gap: 1px;
    width: 31px;
    padding-top: 1px;
}

.actions button {
    height: 12px;
    background-color: #f3f2f4;
    border: 1px solid #a9a8aa;
}

.actions .ok {
    border-color: #555;
}

.actions .gap {
    margin-top: 3px;
}

.win-address-a label { width: 28px; }
.win-address-a .dialog { padding-right: 43px; }
.win-address-b label { width: 29px; }
.win-natrule .actions { width: 54px; }
.win-hsserver label { width: 55px; }
.win-hsserver .actions { width: 41px; }
.win-dhcp1 label { width: 51px; }
.win-dhcp1 .dialog { gap: 7px; }
.win-dhcpnet label { width: 49px; }
.win-dhcpnet .dialog { gap: 7px; }
.win-route-a label, .win-route-b label { width: 47px; }

.pointer {
    position: absolute;
    left: 711px;
    top: 474px;
    width: 8px;
    height: 11px;
}

/* taskbar */
.taskbar {
    display: flex;
    align-items: stretch;
    height: 21px;
    background: linear-gradient(100deg, #b8872f 0 20%, #b98433 40%, #b87330 50%, #c08a3c 55%, #b69c66 55% 88%, #c2993a 88%);
}

.start {
    width: 24px;
}

.start svg {
    width: 14px;
    height: 14px;
    vertical-align: middle;
}

.tasks {
    display: flex;
    width: 344px;
}

.tasks button {
    display: flex;
    flex: 1;
    align-items: center;
    justify-content: center;
    margin: 0 1px;
}

.tasks svg {
    width: 16px;
    height: 16px;
}

.tasks .lit {
    background-color: rgba(255, 255, 255, 0.15);
}

.tasks .strong {
    background-color: rgba(255, 255, 255, 0.4);
}

.tray {
    display: flex;
    align-items: center;
    gap: 5px;
    margin-left: auto;
    padding-right: 9px;
    font-family: "Open Sans", "DejaVu Sans", sans-serif;
    color: #fff;
    text-align: center;
}

.tray svg {
    width: 8px;
    height: 8px;
}

.clock {
    width: 32px;
}

.watermark {
    position: absolute;
    left: 383px;
    bottom: -2px;
    font-family: "DejaVu Sans", sans-serif;
    font-size: 9px;
    line-height: 14px;
    color: #ddd;
    text-shadow: 1px 1px 1px #555;
    white-space: nowrap;
}

.watermark bdi {
    font-weight: bold;
}
```
